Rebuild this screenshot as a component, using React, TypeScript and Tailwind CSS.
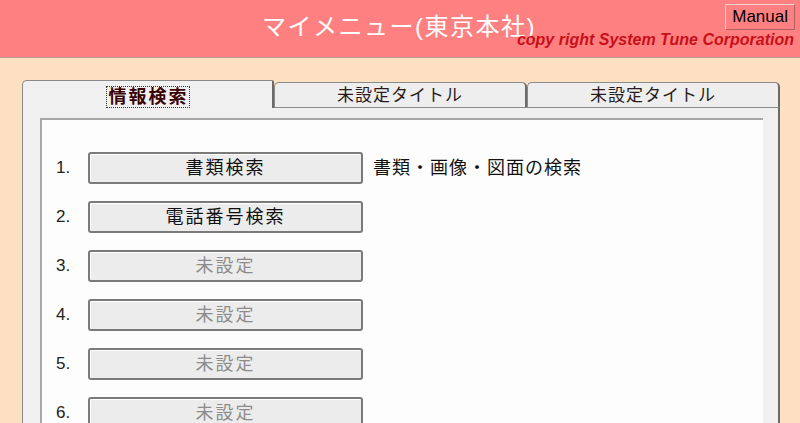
import React from 'react'

const jp = '"Liberation Sans", "Noto Sans CJK JP", sans-serif'

const rows = [
  { label: '書類検索', desc: '書類・画像・図面の検索', enabled: true },
  { label: '電話番号検索', desc: '', enabled: true },
  { label: '未設定', desc: '', enabled: false },
  { label: '未設定', desc: '', enabled: false },
  { label: '未設定', desc: '', enabled: false },
  { label: '未設定', desc: '', enabled: false },
]

function Tab({ label, active }: { label: string; active?: boolean }) {
  if (active) {
    return (
      <div className="relative z-10 -mb-px flex h-[28px] w-[252px] items-start justify-center rounded-tl-[5px] rounded-tr-[2px] border-l border-t border-r-2 border-[#8a8a8a] border-r-[#6a6a6a] bg-[#f0f0f0] pt-[5px]">
        <span className="border border-dotted border-[#333] pl-[2px] text-[18px] leading-[20px] font-bold tracking-[2px] text-[#3a0000]">
          {label}
        </span>
      </div>
    )
  }
  return (
    <div className="flex h-[25px] w-[253px] items-start justify-center rounded-t-[5px] border-l border-t border-r-2 border-[#8a8a8a] border-r-[#6a6a6a] bg-[#eeeeee] pt-[2px]">
      <span className="text-[17px] leading-[21px] tracking-[1px] text-[#2a1a1a]">{label}</span>
    </div>
  )
}

export default function App() {
  return (
    <div className="h-[423px] w-[800px] overflow-hidden bg-[#fddfc1]" style={{ fontFamily: jp }}>
      {/* Header */}
      <div className="grid h-[58px] border-b border-[#c49a96] bg-[#ff8080]">
        <div className="col-start-1 row-start-1 justify-self-center pt-[12px] pr-[2px] text-[24px] leading-[30px] tracking-[1.5px] text-white">
          マイメニュー(東京本社)
        </div>
        <div className="col-start-1 row-start-1 flex flex-col items-end justify-self-end pr-[5px] pt-[4px]">
          <div className="flex h-[26px] items-center border border-[#f4d0d0] border-r-[#b06060] border-b-[#b06060] px-[6px] text-[17px] text-black">
            Manual
          </div>
          <div className="mt-[1px] pr-[1px] text-[16px] leading-[18px] font-bold italic text-[#c8101a]">
            copy right System Tune Corporation
          </div>
        </div>
      </div>

      {/* Tab control */}
      <div className="ml-[22px] mr-[20px] mt-[22px]">
        <div className="flex items-end">
          <Tab label="情報検索" active />
          <Tab label="未設定タイトル" />
          <Tab label="未設定タイトル" />
        </div>
        <div className="h-[330px] border-l border-t border-r-2 border-[#8a8a8a] border-r-[#6a6a6a] bg-[#f0f0f0] pl-[17px] pr-[15px] pt-[10px]">
          <div className="h-full border-l-2 border-t-2 border-[#a8a8a8] bg-[#fdfdfd] pl-[14px] pt-[32px]">
            <div className="flex flex-col gap-[17px]">
              {rows.map((r, i) => (
                <div key={i} className="flex h-[32px] items-center">
                  <span className="w-[32px] text-[17px] text-[#222]">{i + 1}.</span>
                  <button
                    className={`h-[32px] w-[275px] rounded-[3px] border-2 border-[#7a7a7a] bg-[#ececec] text-[18px] tracking-[2px] shadow-[inset_1px_1px_0_#ffffff] ${
                      r.enabled ? 'text-[#111]' : 'text-[#8c8c8c]'
                    }`}
                  >
                    {r.label}
                  </button>
                  {r.desc && <span className="ml-[10px] text-[18px] tracking-[1px] text-[#111]">{r.desc}</span>}
                </div>
              ))}
            </div>
          </div>
        </div>
      </div>
    </div>
  )
}
